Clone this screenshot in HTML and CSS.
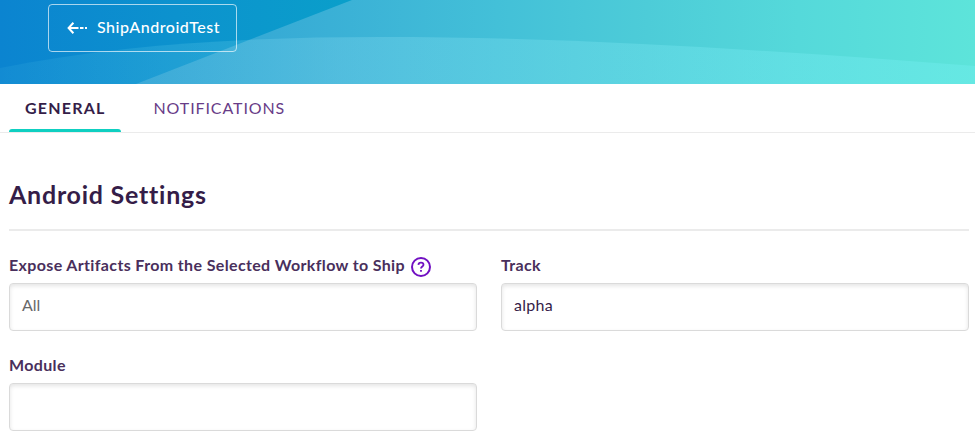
FILE: index.html
```html
<!DOCTYPE html>
<html lang="en">
<head>
<meta charset="utf-8">
<title>Ship settings</title>
<link rel="stylesheet" href="styles.css">
</head>
<body>
<header class="hero">
  <svg class="hero-art" viewBox="0 0 975 84" preserveAspectRatio="none" aria-hidden="true">
    <defs>
      <linearGradient id="deep" gradientUnits="userSpaceOnUse" x1="0" y1="0" x2="352" y2="0">
        <stop offset="0" stop-color="#0b84d0"/><stop offset=".5" stop-color="#0c92ce"/><stop offset="1" stop-color="#0a9fca"/>
      </linearGradient>
      <linearGradient id="light" gradientUnits="userSpaceOnUse" x1="136" y1="0" x2="975" y2="0">
        <stop offset="0" stop-color="#2f9fd3"/><stop offset=".23" stop-color="#3ab0d6"/><stop offset=".43" stop-color="#43c0d8"/><stop offset=".61" stop-color="#4dccd8"/><stop offset=".79" stop-color="#55d9da"/><stop offset="1" stop-color="#5de4da"/>
      </linearGradient>
      <linearGradient id="wave" gradientUnits="userSpaceOnUse" x1="0" y1="0" x2="975" y2="0">
        <stop offset="0" stop-color="#8fffff" stop-opacity=".06"/><stop offset=".35" stop-color="#b4f2ff" stop-opacity=".19"/><stop offset=".7" stop-color="#90f6ff" stop-opacity=".23"/><stop offset="1" stop-color="#80f5ff" stop-opacity=".25"/>
      </linearGradient>
    </defs>
    <path fill="url(#deep)" d="M0 0H975V84H0Z"/>
    <path fill="url(#light)" d="M136 84L352 0H975V84Z"/>
    <path fill="url(#wave)" d="M0 68C120 44 250 37 380 37C580 37 780 51 975 66V84H0Z"/>
  </svg>
  <a class="back">
    <svg class="arrow" width="21" height="12" viewBox="0 0 21 12" fill="none" stroke="#fff" stroke-width="2" aria-hidden="true">
      <path d="M6.4 .8L1.6 6L6.4 11.2M1.6 6H11.5M13 6H16.5M18 6H20"/>
    </svg>
    <span class="back-text">ShipAndroidTest</span>
  </a>
</header>
<nav class="tabs">
  <a class="tab active">GENERAL</a>
  <a class="tab">NOTIFICATIONS</a>
</nav>
<main class="content">
  <h1 class="title">Android Settings</h1>
  <form class="fields">
    <div class="field">
      <div class="label"><span class="label-expose">Expose Artifacts From the Selected Workflow to Ship</span>
        <svg class="help" width="22" height="22" viewBox="0 0 22 22" fill="none" stroke="#7110c2" stroke-width="2" aria-hidden="true">
          <circle cx="11" cy="11" r="9"/>
          <path stroke-width="1.8" d="M8.4 8.9C8.5 7.3 9.5 6.6 11 6.6C12.6 6.6 13.5 7.5 13.5 8.7C13.5 10.5 11 10.6 11 12.6M11 14V15.8"/>
        </svg>
      </div>
      <div class="input placeholder">All</div>
    </div>
    <div class="field">
      <div class="label">Track</div>
      <div class="input">alpha</div>
    </div>
    <div class="field">
      <div class="label">Module</div>
      <div class="input"></div>
    </div>
  </form>
</main>
</body>
</html>
```
FILE: styles.css
```css
* { box-sizing: border-box; }
body { margin: 0; background: #fff; color: #351d48; font: 16px/24px Lato, sans-serif; }
.hero { position: relative; height: 84px; padding: 4px 48px; }
.hero-art { position: absolute; inset: 0; width: 100%; height: 100%; }
.back { position: relative; display: flex; align-items: center; width: 189px; height: 48px; padding: 0 0 2px 18px; border: 1px solid rgba(255,255,255,.65); border-radius: 4px; color: #fff; }
.arrow { margin-right: 9px; margin-top: 2px; }
.back-text { font-weight: 500; letter-spacing: .53px; }
.tabs { display: flex; height: 49px; padding-left: 9px; border-bottom: 1px solid #ebebeb; }
.tab { height: 48px; padding: 12px 16px; margin-right: 16.5px; color: #683c87; letter-spacing: .9px; }
.tab.active { position: relative; width: 112px; color: #351d48; font-weight: 700; letter-spacing: 1.2px; }
.tab.active::after { content: ""; position: absolute; inset: auto 0 0; height: 3px; border-radius: 3px 3px 0 0; background: #0fcfc1; }
.content { padding: 41px 6px 4px 9px; }
.title { margin: 0 0 24px; height: 57px; border-bottom: 2px solid #ebebeb; font-size: 25px; line-height: 40px; font-weight: 700; letter-spacing: .75px; }
.fields { display: grid; grid-template-columns: 468px 468px; gap: 24px; }
.field { height: 76px; }
.label { display: flex; align-items: center; height: 20px; margin-bottom: 8px; color: #492f5c; font-weight: 700; letter-spacing: .36px; white-space: nowrap; }
.help { margin: 4px 0 0 5px; }
.input { height: 48px; padding: 9px 12px; border: 1px solid #dadada; border-radius: 4px; box-shadow: inset 0 2px 4px rgba(0,0,0,.11); letter-spacing: .3px; }
.placeholder { color: #686868; letter-spacing: 0; }
```
